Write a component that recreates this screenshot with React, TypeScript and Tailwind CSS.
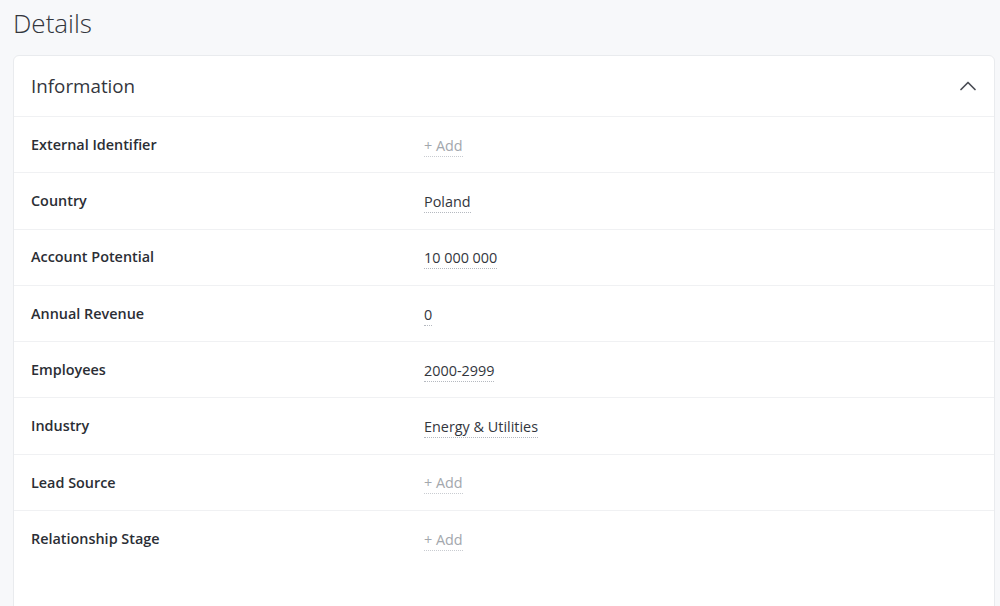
import { ChevronUp } from "lucide-react";

const rows: { label: string; value: string | null }[] = [
  { label: "External Identifier", value: null },
  { label: "Country", value: "Poland" },
  { label: "Account Potential", value: "10 000 000" },
  { label: "Annual Revenue", value: "0" },
  { label: "Employees", value: "2000-2999" },
  { label: "Industry", value: "Energy & Utilities" },
  { label: "Lead Source", value: null },
  { label: "Relationship Stage", value: null },
];

export default function App() {
  return (
    <div className="min-h-[606px] bg-[#f7f8fa] pl-[13px] pr-[5px] font-['Open_Sans',sans-serif] text-[#2d3038]">
      <h1 className="h-[55px] pt-[4px] text-[26px] font-light leading-[38px] text-[#33363d]">Details</h1>
      <div className="h-[560px] rounded-[6px] border border-[#e9ebee] bg-white">
        <div className="flex h-[61px] items-center justify-between border-b border-[#f0f1f3] pl-[17px] pr-[12px]">
          <span className="text-[18.8px] leading-[28px] text-[#33363d]">Information</span>
          <ChevronUp className="h-[28px] w-[28px] text-[#4a4d55]" strokeWidth={1.5} />
        </div>
        {rows.map((row) => (
          <div
            key={row.label}
            className="grid h-[56.3px] grid-cols-[393px_1fr] items-center border-b border-[#f0f1f3] pl-[17px] last:border-b-0"
          >
            <span className="text-[14.4px] font-semibold text-[#2b2e35]">{row.label}</span>
            <span>
              {row.value ? (
                <span className="border-b border-dotted border-[#b5b9c0] pb-[1px] text-[14.4px] text-[#33363d]">
                  {row.value}
                </span>
              ) : (
                <span className="border-b border-dotted border-[#c9ccd1] pb-[1px] text-[14.4px] text-[#a3a7ad]">
                  + Add
                </span>
              )}
            </span>
          </div>
        ))}
      </div>
    </div>
  );
}
